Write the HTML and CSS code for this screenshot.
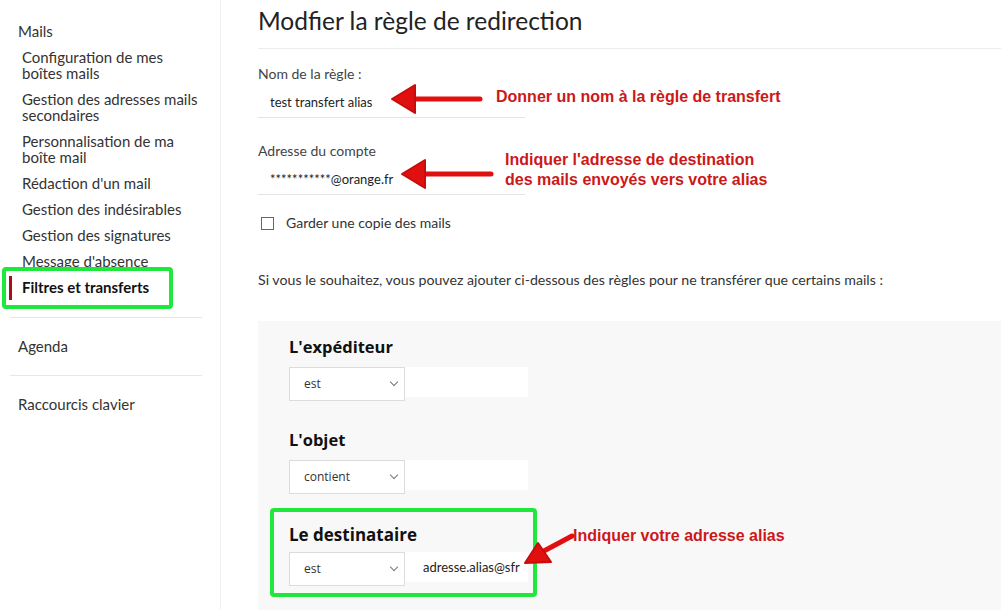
FILE: index.html
```html
<!DOCTYPE html>
<html lang="fr">
<head>
    <meta charset="UTF-8">
    <meta name="viewport" content="width=device-width, initial-scale=1.0">
    <title>Filtres et transferts</title>
    <link rel="stylesheet" href="styles.css">
</head>
<body>

    <aside class="sidebar">
        <div class="nav-title">Mails</div>
        <ul class="nav-list">
            <li>Configuration de mes<br>boîtes mails</li>
            <li>Gestion des adresses mails<br>secondaires</li>
            <li>Personnalisation de ma<br>boîte mail</li>
            <li>Rédaction d'un mail</li>
            <li>Gestion des indésirables</li>
            <li>Gestion des signatures</li>
            <li>Message d'absence</li>
            <li class="active">Filtres et transferts</li>
        </ul>
        <div class="nav-sep"></div>
        <div class="nav-title">Agenda</div>
        <div class="nav-sep"></div>
        <div class="nav-title">Raccourcis clavier</div>

        <div class="mark-box"></div>
    </aside>

    <main class="content">
        <h1 class="title">Modfier la règle de redirection</h1>

        <div class="field">
            <label>Nom de la règle :</label>
            <div class="field-value">test transfert alias</div>
        </div>

        <div class="field">
            <label>Adresse du compte</label>
            <div class="field-value">***********@orange.fr</div>
        </div>

        <div class="check-row">
            <span class="checkbox"></span>
            Garder une copie des mails
        </div>

        <p class="hint">Si vous le souhaitez, vous pouvez ajouter ci-dessous des règles pour ne transférer que certains mails :</p>

        <section class="rules">
            <div class="rule">
                <h3>L'expéditeur</h3>
                <div class="rule-row">
                    <div class="select">est <span class="chev"></span></div>
                    <div class="text-input"></div>
                </div>
            </div>
            <div class="rule">
                <h3>L'objet</h3>
                <div class="rule-row">
                    <div class="select">contient <span class="chev"></span></div>
                    <div class="text-input"></div>
                </div>
            </div>
            <div class="rule marked">
                <h3>Le destinataire</h3>
                <div class="rule-row">
                    <div class="select">est <span class="chev"></span></div>
                    <div class="text-input">adresse.alias@sfr</div>
                </div>
            </div>
        </section>

        <!-- annotations -->
        <svg class="arrow arrow-1" width="100" height="34" viewBox="0 0 100 34">
            <path d="M26 17 H92" stroke="#e01010" stroke-width="5" stroke-linecap="round"/>
            <polygon points="4,17 27,3 27,31" fill="#e01010" stroke="#c80c0c" stroke-width="2" stroke-linejoin="round"/>
        </svg>
        <div class="note note-1">Donner un nom à la règle de transfert</div>

        <svg class="arrow arrow-2" width="100" height="34" viewBox="0 0 100 34">
            <path d="M26 17 H93" stroke="#e01010" stroke-width="5" stroke-linecap="round"/>
            <polygon points="4,17 27,3 27,31" fill="#e01010" stroke="#c80c0c" stroke-width="2" stroke-linejoin="round"/>
        </svg>
        <div class="note note-2">Indiquer l'adresse de destination<br>des mails envoyés vers votre alias</div>

        <svg class="arrow arrow-3" width="56" height="40" viewBox="0 0 56 40">
            <path d="M20 26 L50 10" stroke="#e01010" stroke-width="5" stroke-linecap="round"/>
            <polygon points="3,37 16,17 29,36" fill="#e01010" stroke="#c80c0c" stroke-width="2" stroke-linejoin="round"/>
        </svg>
        <div class="note note-3">Indiquer votre adresse alias</div>
    </main>

</body>
</html>
```

FILE: styles.css
```css
body {
    margin: 0;
    font-family: Lato, "Noto Sans", sans-serif;
    color: #333;
    background: #fff;
    display: flex;
    height: 610px;
    overflow: hidden;
}
.sidebar {
    position: relative;
    width: 221px;
    flex-shrink: 0;
    border-right: 1px solid #f0f0f0;
    padding-top: 22px;
    box-sizing: border-box;
}
.nav-title {
    font-size: 15px;
    line-height: 18px;
    padding-left: 18px;
    color: #333;
}
.nav-list {
    list-style: none;
    margin: 9px 0 22px;
    padding: 0 0 0 22px;
}
.nav-list li {
    font-size: 15px;
    line-height: 16px;
    margin-bottom: 10px;
    color: #333;
}
.nav-list li.active {
    position: relative;
    font-weight: bold;
    color: #111;
}
.nav-list li.active::before {
    content: "";
    position: absolute;
    left: -13px;
    top: -3px;
    width: 3px;
    height: 24px;
    background: #a3101c;
}
.nav-sep {
    height: 1px;
    background: #e6e6e6;
    margin: 20px 18px 19px 10px;
}
.mark-box {
    position: absolute;
    left: 2px;
    top: 267px;
    width: 171px;
    height: 42px;
    box-sizing: border-box;
    border: 4px solid #1ee83c;
    border-radius: 4px;
}

.content {
    position: relative;
    flex: 1;
    padding-left: 37px;
}
.title {
    font-size: 24.5px;
    font-weight: 400;
    color: #222;
    margin: 6px 0 0;
    line-height: 30px;
    padding-bottom: 12px;
    border-bottom: 1px solid #ececec;
}
.field {
    width: 267px;
    margin-top: 16px;
}
.field label {
    display: block;
    font-size: 14px;
    line-height: 18px;
    color: #444;
}
.field-value {
    font-size: 13px;
    color: #222;
    padding: 9px 0 0 12px;
    height: 33px;
    box-sizing: border-box;
    line-height: 16px;
    border-bottom: 1px solid #e4e4e4;
    margin-top: 2px;
}
.field + .field {
    margin-top: 24px;
}
.check-row {
    display: flex;
    align-items: center;
    font-size: 14px;
    line-height: 18px;
    margin-top: 19px;
    color: #333;
}
.checkbox {
    width: 11px;
    height: 11px;
    border: 1px solid #666;
    margin: 0 12px 0 3px;
}
.hint {
    font-size: 14.2px;
    color: #333;
    margin: 39px 0 0;
    line-height: 18px;
}
.rules {
    background: #f8f8f8;
    margin-top: 32px;
    padding: 14px 0 20px 31px;
}
.rule h3 {
    font-family: "Open Sans", sans-serif;
    font-weight: bold;
    font-size: 16.5px;
    color: #111;
    margin: 0 0 8px;
    line-height: 24px;
}
.rule + .rule {
    margin-top: 27px;
}
.rule-row {
    display: flex;
    align-items: flex-start;
}
.select {
    position: relative;
    width: 116px;
    height: 34px;
    box-sizing: border-box;
    border: 1px solid #dcdcdc;
    background: #fff;
    font-family: "Open Sans", sans-serif;
    font-size: 12px;
    line-height: 32px;
    padding-left: 14px;
    color: #333;
}
.chev {
    position: absolute;
    right: 7px;
    top: 11px;
    width: 5px;
    height: 5px;
    border-right: 1px solid #777;
    border-bottom: 1px solid #777;
    transform: rotate(45deg);
}
.text-input {
    width: 123px;
    height: 30px;
    background: #fff;
    font-size: 13px;
    line-height: 30px;
    padding-left: 18px;
    box-sizing: border-box;
    color: #222;
}
.rule.marked {
    margin-left: -19px;
    margin-right: auto;
    width: 267px;
    box-sizing: border-box;
    padding: 11px 0 7px 15px;
    border: 4px solid #1ee83c;
    border-radius: 4px;
    margin-top: 14px;
}
.rule.marked h3 {
    font-size: 17px;
    margin-bottom: 5px;
}

.arrow {
    position: absolute;
}
.arrow-1 { left: 167px; top: 82px; }
.arrow-2 { left: 177px; top: 157px; }
.arrow-3 { left: 301px; top: 526px; }
.note {
    position: absolute;
    font-family: "Liberation Sans", Arial, sans-serif;
    font-weight: bold;
    font-size: 16px;
    line-height: 20px;
    color: #cc1818;
}
.note-1 { left: 275px; top: 87px; }
.note-2 { left: 284px; top: 150px; }
.note-3 { left: 352px; top: 526px; }
```
